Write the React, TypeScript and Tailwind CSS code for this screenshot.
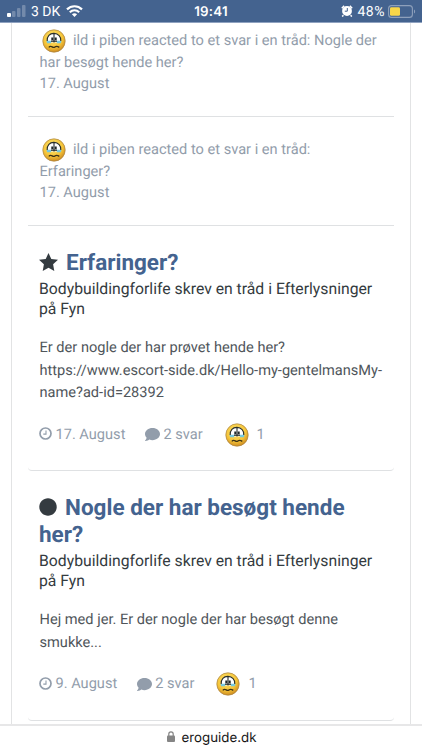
import type { ReactNode } from "react";
import { FaCircle, FaComment } from "react-icons/fa";

function WorriedFace() {
  return (
    <svg viewBox="0 0 24 24" className="h-6 w-6 shrink-0">
      <defs>
        <radialGradient id="face" cx="45%" cy="35%" r="65%">
          <stop offset="0" stopColor="#ffe873" />
          <stop offset="0.65" stopColor="#f5c53a" />
          <stop offset="1" stopColor="#cf8d20" />
        </radialGradient>
      </defs>
      <circle cx="12" cy="12" r="11.2" fill="url(#face)" stroke="#a98443" strokeWidth="0.7" />
      <path d="M5.4 13.6C4.6 7.5 7.8 4 12 4.2s7.4 3.3 6.6 9.4z" fill="#fff" />
      <path d="M4.4 11.8h5l-.4 2.4H5.2zM14.6 11.8h5l-.8 2.4H15z" fill="#76c8df" />
      <path
        d="M5.2 12C4.8 7.4 7.8 4.2 12 4.4s7.2 3 6.8 7.6M12 4.5v9"
        fill="none"
        stroke="#282e2d"
        strokeWidth="1.1"
      />
      <path d="M9.3 8.6h2v2.6h-2zM12.7 8.6h2v2.6h-2z" fill="#20282a" />
      <path d="M9 12.2h6" stroke="#20282a" strokeWidth="1.2" />
      <path
        d="M6.8 18.4c1.1-1.3 2.2-1.2 3.4-.5 1.2.8 1.7.9 2.8 0 1.4-.9 2.6-.7 4.3.5"
        fill="none"
        stroke="#3c3217"
        strokeWidth="1.3"
      />
    </svg>
  );
}

function Clock() {
  return (
    <svg
      viewBox="0 0 13 13"
      className="-mt-[2px] -ml-[0.5px] h-[13px] w-[13px] shrink-0"
      fill="none"
      stroke="currentColor"
    >
      <circle cx="6.5" cy="6.5" r="5.5" strokeWidth="1.7" />
      <path d="M7 3.5v3.6H4.3" strokeWidth="1.1" />
    </svg>
  );
}

function Star() {
  return (
    <svg viewBox="0 0 19 18" className="mr-[8.5px] -ml-[0.5px] inline h-[18px] w-[19px] align-[-1px]" fill="#343b40">
      <path d="m9.5 0 2.8 5.9 6.7.9-4.9 4.5 1.2 6.7-5.8-3.2L3.700 18l1.200-6.700L0 6.800l6.700-.9z" />
    </svg>
  );
}

function StatusBar() {
  return (
    <header className="flex h-[23px] shrink-0 items-center justify-between border-b border-[#8fa2c0] bg-[#44638f] text-white">
      <div className="flex w-[140px] items-center pl-[7px]">
        <svg viewBox="0 0 19 12" className="h-3 w-[19px]" fill="#fff">
          <rect y="8" width="4" height="4" rx="1" />
          <rect x="5" y="6" width="3.5" height="6" rx="1" opacity=".25" />
          <rect x="10" y="3" width="3.5" height="9" rx="1" opacity=".25" />
          <rect x="15" width="3.5" height="12" rx="1" opacity=".25" />
        </svg>
        <span className="ml-[5px] pt-[2px] text-[14px] leading-[20px]">3 DK</span>
        <svg viewBox="0 0 17 12" className="ml-[6px] h-3 w-[17px]" fill="none" stroke="#fff">
          <path d="M1 4.4C5.3.2 11.7.2 16 4.4" strokeWidth="2.2" />
          <path d="M3.8 7.2c2.7-2.6 6.7-2.6 9.4 0" strokeWidth="2.1" />
          <path d="M5.9 9.3c1.5-1.4 3.7-1.4 5.2 0l-2.6 2.6z" fill="#fff" stroke="none" />
        </svg>
      </div>
      <span className="pt-[2px] font-['Inter',sans-serif] text-[13.3px] font-semibold leading-[20px] tracking-[0.2px]">
        19:41
      </span>
      <div className="flex w-[140px] items-center justify-end pr-[6px]">
        <svg viewBox="0 0 12 12" className="h-3 w-3">
          <circle cx="6" cy="6" r="4.9" fill="#fff" />
          <path d="M.8 3.2 3.2.9M8.8.9l2.4 2.3M2.4 10.2 1.2 11.6M9.6 10.2l1.2 1.4" stroke="#fff" strokeWidth="1.5" />
          <path d="M6.3 3v3.2H3.8" fill="none" stroke="#44638f" />
        </svg>
        <span className="ml-[5px] pt-[2px] text-[14px] leading-[20px] tracking-[0.5px]">48%</span>
        <svg viewBox="0 0 28 13" className="ml-[3px] h-[13px] w-7">
          <rect x=".6" y=".6" width="23.8" height="11.8" rx="3" fill="none" stroke="#8ea0bb" strokeWidth="1.1" />
          <rect x="2" y="2.3" width="10" height="8.5" rx="1.4" fill="#f8d649" />
          <path d="M26 4.5c1.5.5 1.5 3.5 0 4z" fill="#8ea0bb" />
        </svg>
      </div>
    </header>
  );
}

function Reaction({ first, second, className }: { first: string; second: string; className: string }) {
  return (
    <article className={`mx-4 border-b border-[#dfe1e3] pl-[11.5px] text-[14.6px] text-[#929dab] ${className}`}>
      <div className="flex h-[23px] items-center gap-[7px] whitespace-nowrap pl-[2.5px]">
        <WorriedFace />
        <span>{first}</span>
      </div>
      <p className="leading-[21px]">{second}</p>
      <p className="leading-[21px]">17. August</p>
    </article>
  );
}

interface ThreadProps {
  icon: ReactNode;
  title: ReactNode;
  body: ReactNode;
  date: string;
  className: string;
}

function Thread({ icon, title, body, date, className }: ThreadProps) {
  return (
    <article className={`mx-4 whitespace-nowrap rounded border-b border-[#dfe1e3] pl-[11px] text-[#343b40] ${className}`}>
      <h2 className="text-[22.5px] font-bold leading-[27px] text-[#44638f]">
        {icon}
        {title}
      </h2>
      <p className="mt-[2px] text-[15.75px] leading-5">
        Bodybuildingforlife skrev en tråd i Efterlysninger
        <br />
        på Fyn
      </p>
      <p className="mt-[17px] pl-[0.5px] text-[14.6px] leading-[22.5px] text-[#50565b]">{body}</p>
      <footer className="mt-[19px] flex h-6 items-center text-[14.6px] text-[#929dab]">
        <Clock />
        <span className="ml-[4px]">{date}</span>
        <FaComment className="ml-5 h-[15px] w-[15px]" />
        <span className="ml-[3px] mr-[22px]">2 svar</span>
        <WorriedFace />
        <span className="ml-2">1</span>
      </footer>
    </article>
  );
}

export default function App() {
  return (
    <div className="flex h-[750px] w-[422px] flex-col overflow-hidden bg-white font-['Roboto',sans-serif] text-[15px] [text-rendering:geometricPrecision]">
      <StatusBar />
      <main className="mx-[11px] h-[701px] shrink-0 overflow-hidden border-x border-[#e2e3e4]">
        <Reaction
          className="h-[94px] pt-[6px]"
          first="ild i piben reacted to et svar i en tråd: Nogle der"
          second="har besøgt hende her?"
        />
        <Reaction
          className="h-[109px] pt-[21px]"
          first="ild i piben reacted to et svar i en tråd:"
          second="Erfaringer?"
        />
        <Thread
          className="h-[245px] pt-[24px]"
          icon={<Star />}
          title="Erfaringer?"
          body={
            <>
              Er der nogle der har prøvet hende her?
              <br />
              https://www.escort-side.dk/Hello-my-gentelmansMy-
              <br />
              name?ad-id=28392
            </>
          }
          date="17. August"
        />
        <Thread
          className="h-[250px] pt-[24px]"
          icon={<FaCircle className="mr-[8px] inline h-[18px] w-[18px] align-[-1px] text-[#343b40]" />}
          title={
            <>
              Nogle der har besøgt hende
              <br />
              her?
            </>
          }
          body={
            <>
              Hej med jer. Er der nogle der har besøgt denne
              <br />
              smukke...
            </>
          }
          date="9. August"
        />
      </main>
      <footer className="flex h-[26px] items-center justify-center border-t-2 border-[#e7e7e8] pl-px text-[#161616]">
        <svg viewBox="0 0 8 11" className="-mt-[3px] mr-[7px] h-[11px] w-2 text-[#858585]">
          <rect y="4.5" width="8" height="6.5" rx="1" fill="currentColor" />
          <path d="M1.8 5V3a2.2 2.2 0 0 1 4.4 0v2" fill="none" stroke="currentColor" strokeWidth="1.2" />
        </svg>
        <span className="pt-px font-['Inter',sans-serif] text-[13.3px]">eroguide.dk</span>
      </footer>
    </div>
  );
}
